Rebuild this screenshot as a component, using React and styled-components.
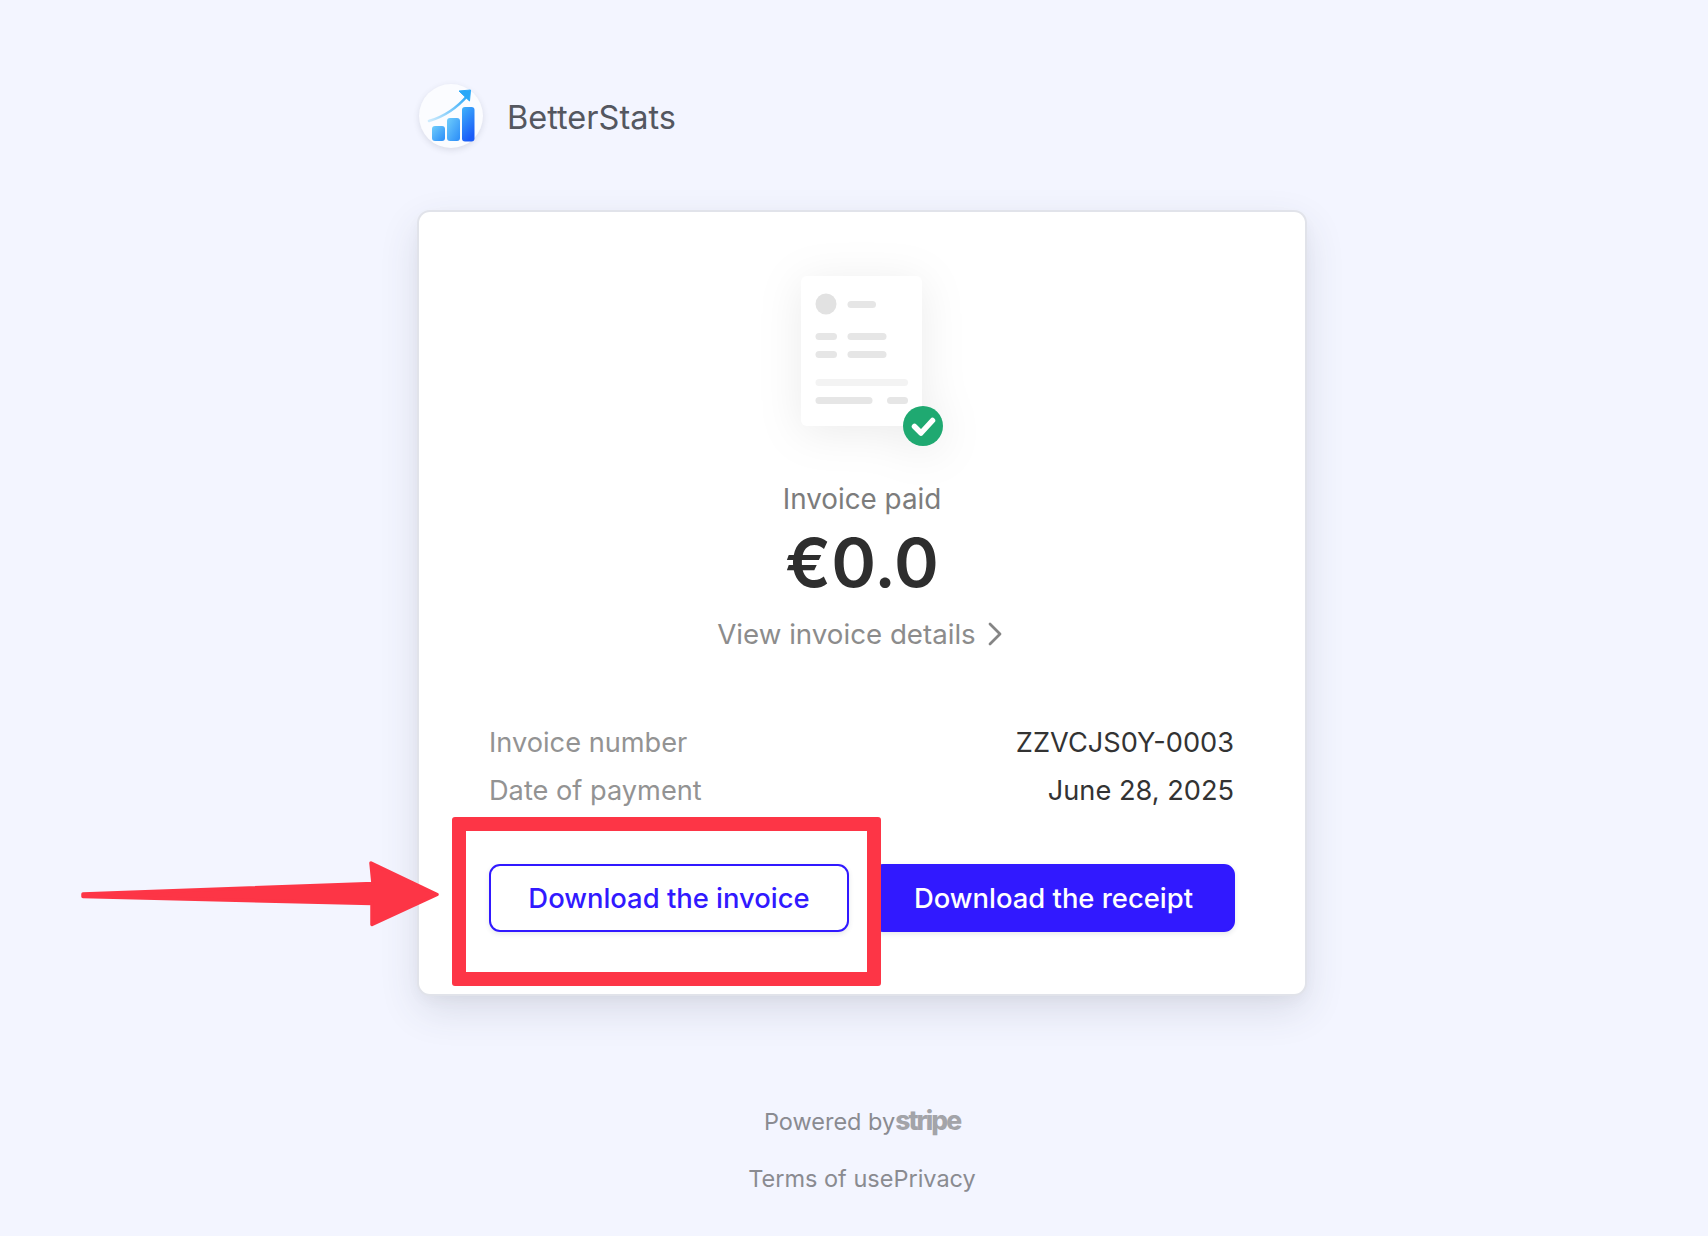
import React from "react";
import styled, { createGlobalStyle } from "styled-components";

const Global = createGlobalStyle`
  html, body {
    margin: 0;
    padding: 0;
    background: #f3f5ff;
    font-family: Inter, "Liberation Sans", sans-serif;
  }
`;

function Logo() {
  return (
    <svg width="64" height="64" viewBox="0 0 64 64">
      <defs>
        <linearGradient id="bar" x1="0" y1="0" x2="1" y2="1">
          <stop offset="0" stopColor="#6fcdfb" />
          <stop offset="1" stopColor="#2a8cf9" />
        </linearGradient>
        <linearGradient id="tall" x1="0" y1="0" x2="0.4" y2="1">
          <stop offset="0" stopColor="#3fb2fb" />
          <stop offset="1" stopColor="#1a5cf8" />
        </linearGradient>
        <linearGradient id="line" x1="0" y1="1" x2="1" y2="0">
          <stop offset="0" stopColor="#cdebfd" />
          <stop offset="1" stopColor="#27a6f8" />
        </linearGradient>
      </defs>
      <path d="M10 37 C24 33 38 24 49 11" fill="none" stroke="url(#line)" strokeWidth="2.6" strokeLinecap="round" />
      <path d="M40 7 L51.5 6 L50.5 17 Z" fill="#2aa8f8" stroke="#2aa8f8" strokeLinejoin="round" />
      <rect x="13" y="42" width="13" height="15" rx="3" fill="url(#bar)" />
      <rect x="28" y="34" width="13" height="23" rx="3" fill="url(#bar)" />
      <rect x="43" y="23" width="12.5" height="34.5" rx="3" fill="url(#tall)" />
    </svg>
  );
}

function InvoiceArt() {
  return (
    <svg width="230" height="210" viewBox="7 0 230 210">
      <rect x="61" y="26" width="121" height="150" rx="6" fill="#fff" />
      <circle cx="86" cy="54" r="10.5" fill="#e2e2e2" />
      <rect x="107.5" y="51" width="28.5" height="7" rx="3.5" fill="#e6e6e6" />
      <rect x="75.5" y="83" width="21.5" height="7" rx="3.5" fill="#e6e6e6" />
      <rect x="107.5" y="83" width="39" height="7" rx="3.5" fill="#e6e6e6" />
      <rect x="75.5" y="101" width="21.5" height="7" rx="3.5" fill="#e6e6e6" />
      <rect x="107.5" y="101" width="39" height="7" rx="3.5" fill="#e6e6e6" />
      <rect x="75.5" y="129" width="92.5" height="7" rx="3.5" fill="#f3f3f3" />
      <rect x="75.5" y="147" width="57" height="7" rx="3.5" fill="#e6e6e6" />
      <rect x="147" y="147" width="21" height="7" rx="3.5" fill="#e6e6e6" />
      <circle cx="183" cy="176" r="20" fill="#1fa971" />
      <path d="M174.5 176.5 L181 183 L192.5 170.5" fill="none" stroke="#fff" strokeWidth="5.5" strokeLinecap="round" strokeLinejoin="round" />
    </svg>
  );
}

function Chevron() {
  return (
    <svg width="14" height="24" viewBox="0 0 14 24">
      <path d="M2 2 L12 12 L2 22" fill="none" stroke="#858585" strokeWidth="2.8" strokeLinecap="round" strokeLinejoin="round" />
    </svg>
  );
}

function Arrow() {
  return (
    <svg width="370" height="80" viewBox="0 0 370 80">
      <path
        d="M3 37 L293 26.5 L291 6 L357 37.5 L292 67.5 L292 46.5 L3 39.5 Z"
        fill="#fd3546"
        stroke="#fd3546"
        strokeWidth="3.5"
        strokeLinejoin="round"
      />
    </svg>
  );
}

export default function App() {
  return (
    <Page>
      <Global />
      <Column>
        <Brand>
          <LogoCircle>
            <Logo />
          </LogoCircle>
          <BrandName>BetterStats</BrandName>
        </Brand>

        <Card>
          <Art>
            <InvoiceArt />
          </Art>
          <PaidLabel>Invoice paid</PaidLabel>
          <Amount>€0.0</Amount>
          <DetailsLink>
            View invoice details
            <Chevron />
          </DetailsLink>

          <Meta>
            <MetaRow>
              <MetaLabel>Invoice number</MetaLabel>
              <MetaValue>ZZVCJS0Y-0003</MetaValue>
            </MetaRow>
            <MetaRow>
              <MetaLabel>Date of payment</MetaLabel>
              <MetaValue>June 28, 2025</MetaValue>
            </MetaRow>
          </Meta>

          <Buttons>
            <Button>Download the invoice</Button>
            <Button $primary>Download the receipt</Button>
          </Buttons>
        </Card>

        <Footer>
          <Powered>
            Powered by<StripeMark>stripe</StripeMark>
          </Powered>
          <Links>
            <span>Terms of use</span>
            <span>Privacy</span>
          </Links>
        </Footer>
      </Column>

      <Highlight />
      <ArrowWrap>
        <Arrow />
      </ArrowWrap>
    </Page>
  );
}

const Page = styled.div`
  position: relative;
  height: 1236px;
  overflow: hidden;
  padding: 84px 0 0 419px;
  box-sizing: border-box;
  background: #f3f5ff;
`;

const Column = styled.div`
  width: 886px;
`;

const Brand = styled.div`
  display: flex;
  align-items: center;
  gap: 24px;
  height: 64px;
`;

const LogoCircle = styled.div`
  width: 64px;
  height: 64px;
  border-radius: 50%;
  background: #fbfcff;
  box-shadow: 0 2px 6px rgba(60, 66, 87, 0.14);
  svg {
    display: block;
    filter: blur(0.5px);
  }
`;

const BrandName = styled.div`
  font-size: 32.5px;
  font-weight: 400;
  color: #545760;
  position: relative;
  top: 1px;
`;

const Card = styled.div`
  box-sizing: border-box;
  margin-top: 64px;
  height: 782px;
  padding: 38px 71px 0 71px;
  background: #fff;
  border-radius: 11px;
  box-shadow: 0 0 0 2px #e1e3ea, 0 15px 40px rgba(60, 66, 87, 0.14), 0 5px 15px rgba(0, 0, 0, 0.04);
  display: flex;
  flex-direction: column;
  align-items: center;
`;

const Art = styled.div`
  width: 230px;
  height: 210px;
  filter: drop-shadow(0 6px 22px rgba(0, 0, 0, 0.08));
  svg {
    display: block;
  }
`;

const PaidLabel = styled.div`
  margin-top: 22px;
  font-size: 27.8px;
  line-height: 34px;
  color: #7c7c7c;
`;

const Amount = styled.div`
  margin-top: 6px;
  font-size: 68px;
  line-height: 80px;
  font-weight: 600;
  color: #2e2e2e;
`;

const DetailsLink = styled.div`
  margin-top: 15px;
  padding-right: 5px;
  display: flex;
  align-items: center;
  gap: 12px;
  font-size: 27.7px;
  line-height: 34px;
  color: #8c8c8c;
`;

const Meta = styled.div`
  align-self: stretch;
  margin-top: 75px;
  display: flex;
  flex-direction: column;
  gap: 14px;
`;

const MetaRow = styled.div`
  display: flex;
  justify-content: space-between;
  font-size: 27.2px;
  line-height: 34px;
`;

const MetaLabel = styled.span`
  color: #939393;
  margin-left: -1px;
`;

const MetaValue = styled.span`
  color: #333;
`;

const Buttons = styled.div`
  align-self: stretch;
  margin: 56px -1px 0 -1px;
  display: flex;
  gap: 23px;
`;

const Button = styled.button`
  flex: ${(p) => (p.$primary ? "0 0 363px" : "0 0 360px")};
  height: 68px;
  box-sizing: border-box;
  border-radius: 11px;
  border: 2px solid #3119ff;
  background: ${(p) => (p.$primary ? "#3119ff" : "#fff")};
  color: ${(p) => (p.$primary ? "#fff" : "#3119ff")};
  font-family: inherit;
  font-size: 27.4px;
  font-weight: 500;
  box-shadow: 0 2px 5px rgba(60, 66, 87, 0.12);
`;

const Footer = styled.div`
  margin-top: 111px;
  display: flex;
  flex-direction: column;
  align-items: center;
  gap: 27px;
  font-size: 23.5px;
  line-height: 30px;
  color: #8a8b91;
`;

const Powered = styled.div`
  display: flex;
  align-items: baseline;
`;

const StripeMark = styled.span`
  font-weight: 800;
  font-size: 26.5px;
  letter-spacing: -2px;
  color: #a3a4a9;
`;

const Links = styled.div`
  display: flex;
`;

const Highlight = styled.div`
  position: absolute;
  left: 452px;
  top: 817px;
  width: 429px;
  height: 169px;
  box-sizing: border-box;
  border: 14px solid #fd3546;
  border-radius: 3px;
`;

const ArrowWrap = styled.div`
  position: absolute;
  left: 80px;
  top: 857px;
  svg {
    display: block;
  }
`;
